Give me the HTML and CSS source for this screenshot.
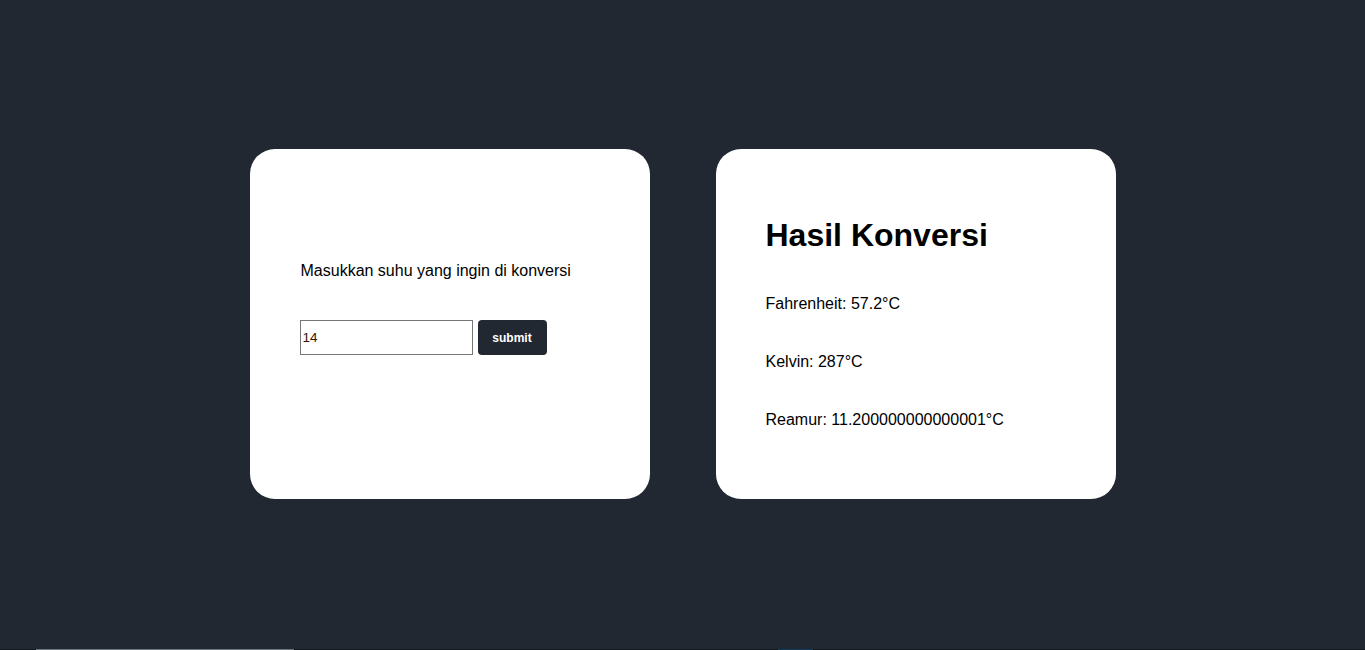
FILE: index.html
```html
<!DOCTYPE html>
<html lang="id">
<head>
<meta charset="utf-8">
<title>Konversi Suhu</title>
<link rel="stylesheet" href="styles.css">
</head>
<body>
<main class="page">
  <section class="card card-input">
    <p class="label">Masukkan suhu yang ingin di konversi</p>
    <form class="form">
      <input class="field" type="text" value="14">
      <button class="btn" type="button">submit</button>
    </form>
  </section>
  <section class="card card-result">
    <h1 class="title">Hasil Konversi</h1>
    <p class="result">Fahrenheit: 57.2°C</p>
    <p class="result">Kelvin: 287°C</p>
    <p class="result">Reamur: 11.200000000000001°C</p>
  </section>
</main>
<div class="strip">
  <span class="strip-gap a"></span>
  <span class="strip-thumb"></span>
  <span class="strip-gap b"></span>
  <span class="strip-blue"></span>
  <span class="strip-gap c"></span>
</div>
</body>
</html>
```

FILE: styles.css
```css
html, body {
  margin: 0;
  padding: 0;
  background: #222831;
  font-family: "Liberation Sans", Arial, sans-serif;
  color: #000;
}

.page {
  height: 648px;
  display: flex;
  justify-content: center;
  align-items: center;
  gap: 66px;
}

.card {
  box-sizing: border-box;
  width: 400px;
  height: 350px;
  background: #fff;
  border-radius: 25px;
  padding: 0 50px;
}

.card-input {
  padding-top: 113px;
  padding-left: 50px;
}

.label {
  margin: 0 0 40px 1px;
  font-size: 16px;
  line-height: 18px;
}

.form {
  display: flex;
  gap: 5px;
  margin: 0;
}

.field {
  box-sizing: border-box;
  width: 173px;
  height: 35px;
  border: 1px solid #767676;
  padding: 0 2px;
  margin: 0;
  font-family: "Liberation Sans", Arial, sans-serif;
  font-size: 13.5px;
  color: #3a1200;
  background: #fff;
  border-radius: 0;
  outline: none;
}

.btn {
  box-sizing: border-box;
  width: 69px;
  height: 35px;
  border: none;
  border-radius: 4px;
  background: #222831;
  color: #fff;
  font-family: "Liberation Sans", Arial, sans-serif;
  font-weight: bold;
  font-size: 12px;
  padding: 0;
  margin: 0;
}

.card-result {
  padding-top: 68px;
}

.title {
  margin: 0 0 41px;
  font-size: 32px;
  line-height: 37px;
  font-weight: bold;
}

.result {
  margin: 0 0 40px;
  font-size: 16px;
  line-height: 18px;
}

.strip {
  position: fixed;
  left: 0;
  right: 0;
  bottom: 0;
  height: 1px;
  display: flex;
  background: #111820;
}

.strip-gap.a { width: 36px; }
.strip-thumb { width: 258px; background: #6b737c; }
.strip-gap.b { width: 484px; }
.strip-blue { width: 35px; background: #0e3a5c; }
.strip-gap.c { flex: 1; }
```
